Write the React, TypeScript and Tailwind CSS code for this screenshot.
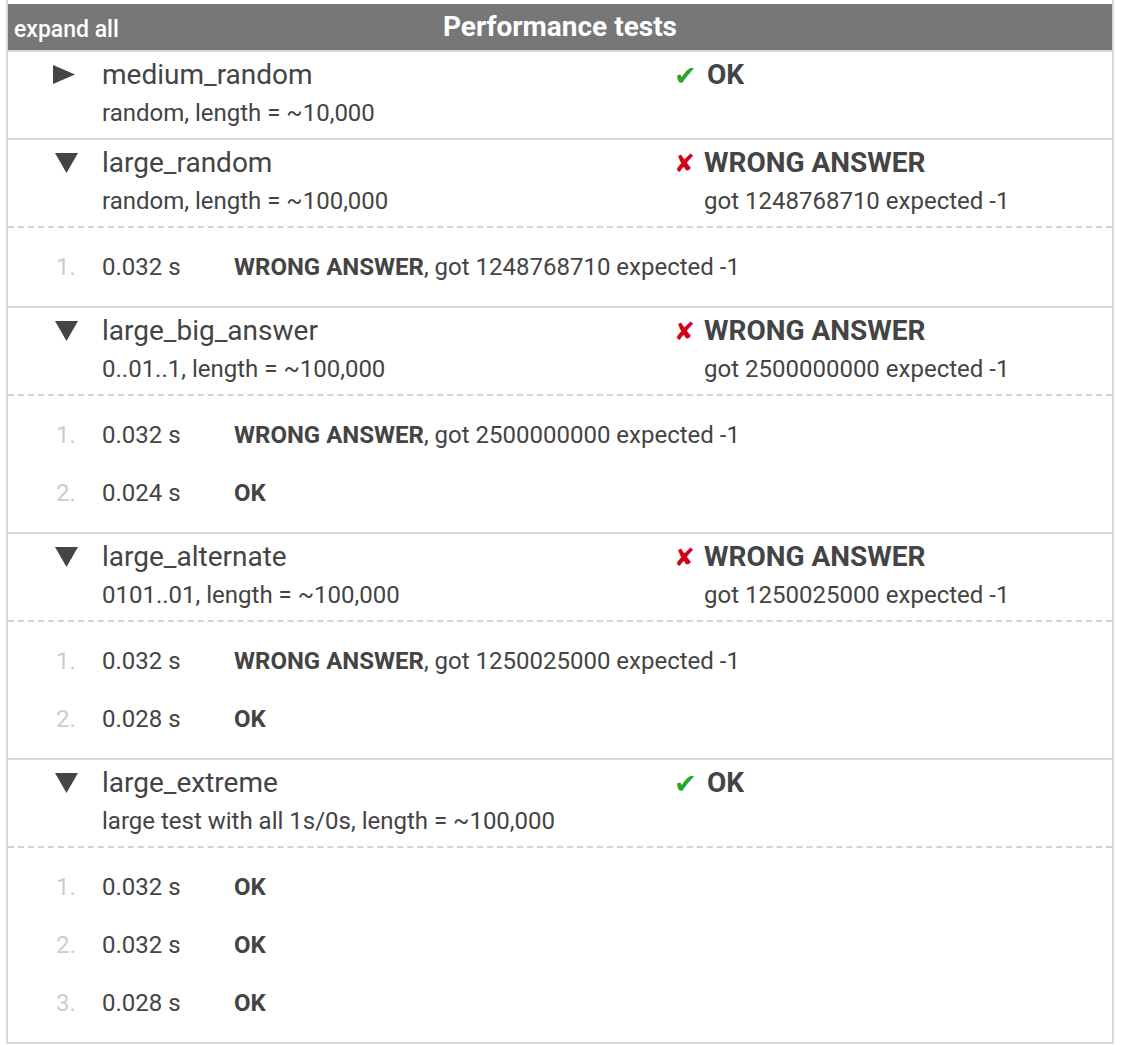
import React from 'react';

type Run = { time: string; ok: boolean; msg?: string };

type Test = {
    name: string;
    desc: string;
    ok: boolean;
    got?: string;
    open: boolean;
    runs: Run[];
};

const tests: Test[] = [
    { name: 'medium_random', desc: 'random, length = ~10,000', ok: true, open: false, runs: [] },
    {
        name: 'large_random',
        desc: 'random, length = ~100,000',
        ok: false,
        got: 'got 1248768710 expected -1',
        open: true,
        runs: [{ time: '0.032 s', ok: false, msg: 'got 1248768710 expected -1' }],
    },
    {
        name: 'large_big_answer',
        desc: '0..01..1, length = ~100,000',
        ok: false,
        got: 'got 2500000000 expected -1',
        open: true,
        runs: [
            { time: '0.032 s', ok: false, msg: 'got 2500000000 expected -1' },
            { time: '0.024 s', ok: true },
        ],
    },
    {
        name: 'large_alternate',
        desc: '0101..01, length = ~100,000',
        ok: false,
        got: 'got 1250025000 expected -1',
        open: true,
        runs: [
            { time: '0.032 s', ok: false, msg: 'got 1250025000 expected -1' },
            { time: '0.028 s', ok: true },
        ],
    },
    {
        name: 'large_extreme',
        desc: 'large test with all 1s/0s, length = ~100,000',
        ok: true,
        open: true,
        runs: [
            { time: '0.032 s', ok: true },
            { time: '0.032 s', ok: true },
            { time: '0.028 s', ok: true },
        ],
    },
];

const Arrow = ({ open }: { open: boolean }) =>
    open ? (
        <svg width="23" height="20" viewBox="0 0 23 20" className="ml-[47px] mt-[13px]">
            <path d="M0 0 H23 L11.5 20 Z" fill="#454545" />
        </svg>
    ) : (
        <svg width="22" height="19" viewBox="0 0 22 19" className="ml-[45px] mt-[13px]">
            <path d="M0 0 L22 9.5 L0 19 Z" fill="#454545" />
        </svg>
    );

const Mark = ({ ok }: { ok: boolean }) =>
    ok ? (
        <span className="w-[33px] text-[27px] leading-none text-[#2aa52a]" style={{ fontFamily: '"DejaVu Sans", sans-serif' }}>
            ✔
        </span>
    ) : (
        <span className="w-[30px] text-[25px] leading-none text-[#d0021b]" style={{ fontFamily: '"DejaVu Sans", sans-serif' }}>
            ✘
        </span>
    );

export default function App() {
    return (
        <div className="min-h-screen bg-white text-[#444]" style={{ fontFamily: 'Roboto, "Liberation Sans", sans-serif' }}>
            <div className="ml-[6px] w-[1108px] border-x-2 border-b-2 border-[#d9d9d9] pt-[4px]">
                {/* Header */}
                <div className="grid h-[46px] grid-cols-[1fr_auto_1fr] items-center bg-[#777777] text-white">
                    <span className="pl-[6px] pt-[6px] text-[23px] font-medium">expand all</span>
                    <span className="text-[28px] font-bold">Performance tests</span>
                    <span />
                </div>

                {tests.map((t) => (
                    <div key={t.name} className="border-t-2 border-[#d9d9d9]">
                        <div className="grid h-[86px] grid-cols-[94px_572px_1fr] items-start">
                            <div>
                                <Arrow open={t.open} />
                            </div>
                            <div className="pt-[6px]">
                                <div className="text-[28px] leading-[34px]">{t.name}</div>
                                <div className="mt-[7px] text-[24px] leading-[28px]">{t.desc}</div>
                            </div>
                            <div className="pt-[6px]">
                                <div className="flex h-[34px] items-center">
                                    <Mark ok={t.ok} />
                                    <span className="text-[28px] font-bold">{t.ok ? 'OK' : 'WRONG ANSWER'}</span>
                                </div>
                                {t.got && <div className="mt-[7px] pl-[30px] text-[24px] leading-[28px]">{t.got}</div>}
                            </div>
                        </div>

                        {t.open && (
                            <div className="border-t-2 border-dashed border-[#d4d4d4] py-[10px]">
                                {t.runs.map((r, i) => (
                                    <div key={i} className="grid h-[58px] grid-cols-[94px_132px_1fr] items-center text-[24px]">
                                        <span className="pl-[48px] text-[#cccccc]">{i + 1}.</span>
                                        <span>{r.time}</span>
                                        <span>
                                            <b className="font-bold">{r.ok ? 'OK' : 'WRONG ANSWER'}</b>
                                            {r.msg ? `, ${r.msg}` : ''}
                                        </span>
                                    </div>
                                ))}
                            </div>
                        )}
                    </div>
                ))}
            </div>
        </div>
    );
}
